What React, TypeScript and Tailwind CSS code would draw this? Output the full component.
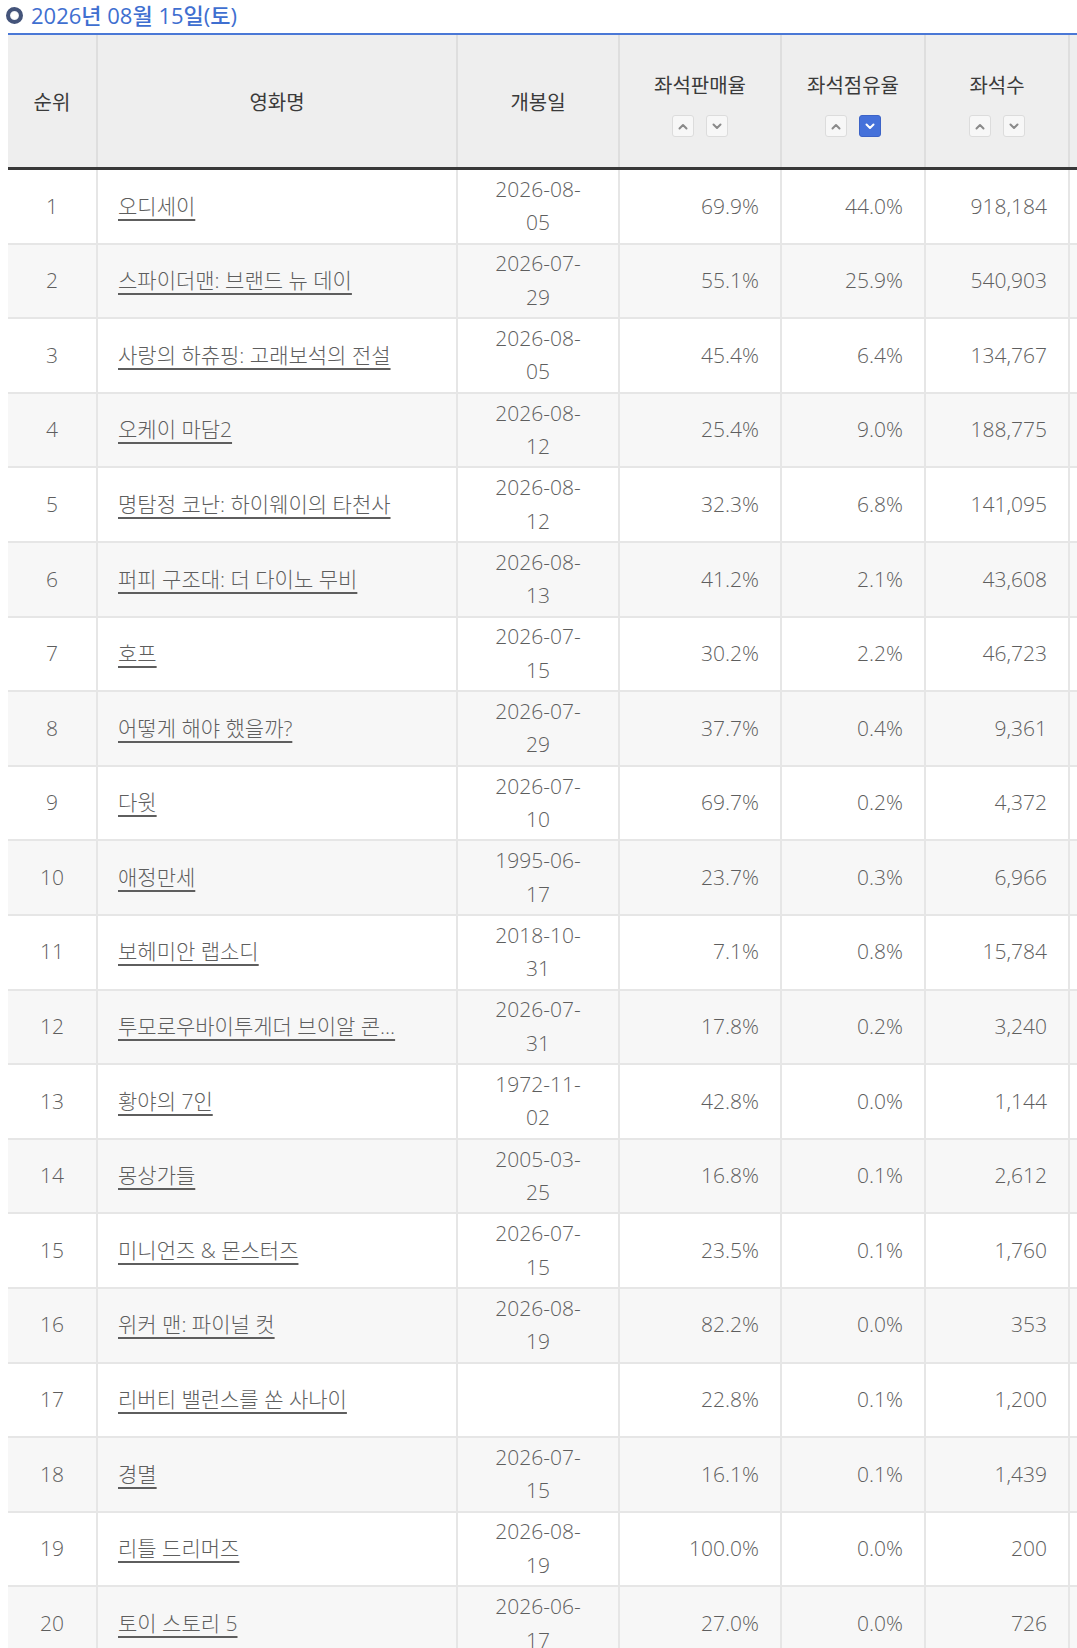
import React from 'react'

type Row = {
  rank: number
  title: string
  open: [string, string] | null
  sales: string
  share: string
  seats: string
}

const rows: Row[] = [
  { rank: 1, title: '오디세이', open: ['2026-08-', '05'], sales: '69.9%', share: '44.0%', seats: '918,184' },
  { rank: 2, title: '스파이더맨: 브랜드 뉴 데이', open: ['2026-07-', '29'], sales: '55.1%', share: '25.9%', seats: '540,903' },
  { rank: 3, title: '사랑의 하츄핑: 고래보석의 전설', open: ['2026-08-', '05'], sales: '45.4%', share: '6.4%', seats: '134,767' },
  { rank: 4, title: '오케이 마담2', open: ['2026-08-', '12'], sales: '25.4%', share: '9.0%', seats: '188,775' },
  { rank: 5, title: '명탐정 코난: 하이웨이의 타천사', open: ['2026-08-', '12'], sales: '32.3%', share: '6.8%', seats: '141,095' },
  { rank: 6, title: '퍼피 구조대: 더 다이노 무비', open: ['2026-08-', '13'], sales: '41.2%', share: '2.1%', seats: '43,608' },
  { rank: 7, title: '호프', open: ['2026-07-', '15'], sales: '30.2%', share: '2.2%', seats: '46,723' },
  { rank: 8, title: '어떻게 해야 했을까?', open: ['2026-07-', '29'], sales: '37.7%', share: '0.4%', seats: '9,361' },
  { rank: 9, title: '다윗', open: ['2026-07-', '10'], sales: '69.7%', share: '0.2%', seats: '4,372' },
  { rank: 10, title: '애정만세', open: ['1995-06-', '17'], sales: '23.7%', share: '0.3%', seats: '6,966' },
  { rank: 11, title: '보헤미안 랩소디', open: ['2018-10-', '31'], sales: '7.1%', share: '0.8%', seats: '15,784' },
  { rank: 12, title: '투모로우바이투게더 브이알 콘…', open: ['2026-07-', '31'], sales: '17.8%', share: '0.2%', seats: '3,240' },
  { rank: 13, title: '황야의 7인', open: ['1972-11-', '02'], sales: '42.8%', share: '0.0%', seats: '1,144' },
  { rank: 14, title: '몽상가들', open: ['2005-03-', '25'], sales: '16.8%', share: '0.1%', seats: '2,612' },
  { rank: 15, title: '미니언즈 & 몬스터즈', open: ['2026-07-', '15'], sales: '23.5%', share: '0.1%', seats: '1,760' },
  { rank: 16, title: '위커 맨: 파이널 컷', open: ['2026-08-', '19'], sales: '82.2%', share: '0.0%', seats: '353' },
  { rank: 17, title: '리버티 밸런스를 쏜 사나이', open: null, sales: '22.8%', share: '0.1%', seats: '1,200' },
  { rank: 18, title: '경멸', open: ['2026-07-', '15'], sales: '16.1%', share: '0.1%', seats: '1,439' },
  { rank: 19, title: '리틀 드리머즈', open: ['2026-08-', '19'], sales: '100.0%', share: '0.0%', seats: '200' },
  { rank: 20, title: '토이 스토리 5', open: ['2026-06-', '17'], sales: '27.0%', share: '0.0%', seats: '726' },
]

const cols = 'grid grid-cols-[90px_360px_162px_162px_144px_144px_200px]'

const Chevron = ({ up }: { up?: boolean }) => (
  <svg width="10" height="7" viewBox="0 0 10 7" fill="none">
    <polyline
      points={up ? '1.5,5.5 5,2 8.5,5.5' : '1.5,1.5 5,5 8.5,1.5'}
      stroke="currentColor"
      strokeWidth="2"
      strokeLinecap="round"
      strokeLinejoin="round"
    />
  </svg>
)

const SortButtons = ({ active }: { active?: 'up' | 'down' }) => (
  <div className="flex gap-[12px]">
    <button
      className={
        active === 'up'
          ? 'w-[22px] h-[22px] flex items-center justify-center rounded-[3px] bg-[#4571da] border border-[#3c63c7] text-white'
          : 'w-[22px] h-[22px] flex items-center justify-center rounded-[3px] bg-[#f7f7f7] border border-[#dcdcdc] text-[#8a8a8a]'
      }
    >
      <Chevron up />
    </button>
    <button
      className={
        active === 'down'
          ? 'w-[22px] h-[22px] flex items-center justify-center rounded-[3px] bg-[#4571da] border border-[#3c63c7] text-white'
          : 'w-[22px] h-[22px] flex items-center justify-center rounded-[3px] bg-[#f7f7f7] border border-[#dcdcdc] text-[#8a8a8a]'
      }
    >
      <Chevron />
    </button>
  </div>
)

const SortHead = ({ label, active }: { label: string; active?: 'up' | 'down' }) => (
  <div className="flex flex-col items-center justify-center gap-[14px] pt-[6px] border-r-2 border-[#dedede]">
    <span className="leading-[30px]">{label}</span>
    <SortButtons active={active} />
  </div>
)

export default function App() {
  return (
    <div className="w-[1077px] overflow-hidden bg-white font-['Open_Sans','Noto_Sans_CJK_KR',sans-serif] font-light text-[21px]">
      <div className="h-[33px] flex items-center gap-[8px] pl-[6px] pb-[3px]">
        <span className="w-[17px] h-[17px] rounded-full border-[4px] border-[#44547a] bg-white shadow-[inset_0_0_1px_#8a97b5]" />
        <h1 className="text-[22px] font-medium text-[#3f6fd0] leading-none">2026년 08월 15일(토)</h1>
      </div>

      <div className="ml-[8px] w-[1300px] border-t-2 border-[#4a78d6]">
        <div className={`${cols} h-[135px] bg-[#eeeeee] border-b-[3px] border-[#383838] text-[#3a3a3a] font-normal text-[20px]`}>
          <div className="flex items-center justify-center pt-[4px] border-r-2 border-[#dedede]">순위</div>
          <div className="flex items-center justify-center pt-[4px] border-r-2 border-[#dedede]">영화명</div>
          <div className="flex items-center justify-center pt-[4px] border-r-2 border-[#dedede]">개봉일</div>
          <SortHead label="좌석판매율" />
          <SortHead label="좌석점유율" active="down" />
          <SortHead label="좌석수" />
          <div />
        </div>

        {rows.map((r, i) => (
          <div
            key={r.rank}
            className={`${cols} h-[74.6px] border-b-2 border-[#e6e6e6] text-[#5e5e5e] ${
              i % 2 === 1 ? 'bg-[#f7f7f7]' : 'bg-white'
            }`}
          >
            <div className="flex items-center justify-center border-r-2 border-[#e6e6e6]">{r.rank}</div>
            <div className="flex items-center px-[20px] border-r-2 border-[#e6e6e6] overflow-hidden">
              <a href="#" className="underline underline-offset-[5px] decoration-[1.5px] whitespace-nowrap text-[#5e5e5e]">
                {r.title}
              </a>
            </div>
            <div className="flex items-center justify-center text-center leading-[33.5px] border-r-2 border-[#e6e6e6]">
              {r.open && (
                <span>
                  {r.open[0]}
                  <br />
                  {r.open[1]}
                </span>
              )}
            </div>
            <div className="flex items-center justify-end pr-[21px] border-r-2 border-[#e6e6e6]">{r.sales}</div>
            <div className="flex items-center justify-end pr-[21px] border-r-2 border-[#e6e6e6]">{r.share}</div>
            <div className="flex items-center justify-end pr-[21px] border-r-2 border-[#e6e6e6]">{r.seats}</div>
            <div />
          </div>
        ))}
      </div>
    </div>
  )
}
